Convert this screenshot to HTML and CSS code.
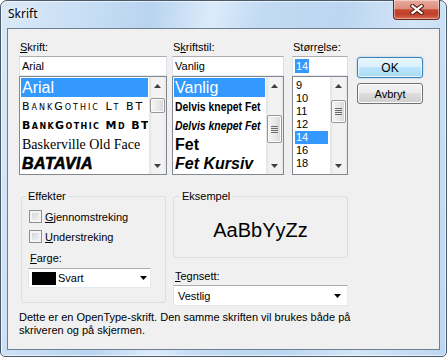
FILE: index.html
```html
<!DOCTYPE html>
<html lang="no">
<head>
    <meta charset="UTF-8">
    <meta name="viewport" content="width=device-width, initial-scale=1.0">
    <title>Skrift</title>
    <link rel="stylesheet" href="styles.css">
</head>
<body>
    <div class="window">
        <div class="titlebar">
            <span class="title">Skrift</span>
            <div class="close">
                <svg width="14" height="11" viewBox="0 0 14 11">
                    <path d="M2.5 2 L11.5 9 M11.5 2 L2.5 9" stroke="#5a2116" stroke-width="4.2" stroke-linecap="square"/>
                    <path d="M2.5 2 L11.5 9 M11.5 2 L2.5 9" stroke="#fff" stroke-width="2.2" stroke-linecap="square"/>
                </svg>
            </div>
        </div>

        <div class="client">
            <div class="top-row">
                <!-- font -->
                <div class="col-font">
                    <div class="lbl"><u>S</u>krift:</div>
                    <div class="field">Arial</div>
                    <div class="listbox">
                        <ul class="items">
                            <li class="item big sel">Arial</li>
                            <li class="item bank">BankGothic Lt BT</li>
                            <li class="item bank bank-md">BankGothic Md BT</li>
                            <li class="item bask">Baskerville Old Face</li>
                            <li class="item batavia">BATAVIA</li>
                        </ul>
                        <div class="scroll">
                            <div class="arrow"><svg width="7" height="4"><path d="M0 4 L3.5 0 L7 4Z" fill="#404040"/></svg></div>
                            <div class="track"><div class="thumb t-font"></div></div>
                            <div class="arrow"><svg width="7" height="4"><path d="M0 0 L7 0 L3.5 4Z" fill="#404040"/></svg></div>
                        </div>
                    </div>
                </div>

                <!-- style -->
                <div class="col-style">
                    <div class="lbl">S<u>k</u>riftstil:</div>
                    <div class="field">Vanlig</div>
                    <div class="listbox">
                        <ul class="items">
                            <li class="item big sel">Vanlig</li>
                            <li class="item narrow"><span>Delvis knepet Fet</span></li>
                            <li class="item narrow ital"><span>Delvis knepet Fet</span></li>
                            <li class="item big bold">Fet</li>
                            <li class="item big bold ital">Fet Kursiv</li>
                        </ul>
                        <div class="scroll">
                            <div class="arrow"><svg width="7" height="4"><path d="M0 4 L3.5 0 L7 4Z" fill="#404040"/></svg></div>
                            <div class="track">
                                <div class="thumb t-style"><i class="grip"></i><i class="grip"></i><i class="grip"></i><i class="grip"></i></div>
                            </div>
                            <div class="arrow"><svg width="7" height="4"><path d="M0 0 L7 0 L3.5 4Z" fill="#404040"/></svg></div>
                        </div>
                    </div>
                </div>

                <!-- size -->
                <div class="col-size">
                    <div class="lbl">Størr<u>e</u>lse:</div>
                    <div class="field"><span class="picked">14</span></div>
                    <div class="listbox">
                        <ul class="items sizes">
                            <li class="item">9</li>
                            <li class="item">10</li>
                            <li class="item">11</li>
                            <li class="item">12</li>
                            <li class="item sel">14</li>
                            <li class="item">16</li>
                            <li class="item">18</li>
                        </ul>
                        <div class="scroll">
                            <div class="arrow"><svg width="7" height="4"><path d="M0 4 L3.5 0 L7 4Z" fill="#404040"/></svg></div>
                            <div class="track">
                                <div class="thumb t-size"><i class="grip"></i><i class="grip"></i><i class="grip"></i><i class="grip"></i></div>
                            </div>
                            <div class="arrow"><svg width="7" height="4"><path d="M0 0 L7 0 L3.5 4Z" fill="#404040"/></svg></div>
                        </div>
                    </div>
                </div>

                <div class="btns">
                    <div class="btn btn-ok">OK</div>
                    <div class="btn">Avbryt</div>
                </div>
            </div>

            <div class="mid-row">
                <fieldset class="group effects">
                    <legend>Effekter</legend>
                    <div class="check-row"><span class="box"></span><span><u>G</u>jennomstreking</span></div>
                    <div class="check-row"><span class="box"></span><span><u>U</u>nderstreking</span></div>
                    <div class="lbl farge"><u>F</u>arge:</div>
                    <div class="combo color-combo">
                        <span class="swatch"></span>
                        <span class="combo-text">Svart</span>
                        <svg class="drop" width="7" height="4"><path d="M0 0 L7 0 L3.5 4Z" fill="#000"/></svg>
                    </div>
                </fieldset>

                <div class="right-col">
                    <fieldset class="group sample">
                        <legend>Eksempel</legend>
                        <div class="sample-area">AaBbYyZz</div>
                    </fieldset>
                    <div class="lbl charset"><u>T</u>egnsett:</div>
                    <div class="combo charset-combo">
                        <span>Vestlig</span>
                        <svg class="drop" width="7" height="4"><path d="M0 0 L7 0 L3.5 4Z" fill="#000"/></svg>
                    </div>
                </div>
            </div>

            <p class="note">Dette er en OpenType-skrift. Den samme skriften vil brukes både på<br>skriveren og på skjermen.</p>
        </div>
    </div>
</body>
</html>
```

FILE: styles.css
```css
* {
    margin: 0;
    padding: 0;
    box-sizing: border-box;
}

body {
    width: 447px;
    height: 357px;
    overflow: hidden;
    background: #fff;
    font-family: "Liberation Sans", Arial, sans-serif;
    font-size: 11px;
    color: #000;
}

ul {
    list-style: none;
}

/* window frame */
.window {
    width: 447px;
    height: 357px;
    display: flex;
    flex-direction: column;
    padding: 0 6px 6px;
    border: 1px solid #4b5a6b;
    border-radius: 7px 7px 5px 5px;
    background: linear-gradient(100deg, #dae9f8 0%, #c4dcf4 20%, #b9d4f0 30%, #dcebfa 42%, #c2daf3 52%, #bcd6f1 68%, #d3e5f7 82%, #bdd6f0 100%);
    box-shadow: inset 0 0 0 1px rgba(255, 255, 255, 0.6);
}

.titlebar {
    height: 27px;
    flex-shrink: 0;
    display: flex;
    align-items: flex-start;
}

.title {
    padding: 5px 0 0 1px;
    font: 12px/16px "Noto Sans", "Liberation Sans", sans-serif;
    text-shadow: 0 0 8px #fff, 0 0 4px rgba(255, 255, 255, 0.8);
}

.close {
    margin-left: auto;
    margin-top: -1px;
    width: 47px;
    height: 20px;
    display: flex;
    align-items: center;
    justify-content: center;
    border: 1px solid #6c2619;
    border-top: none;
    border-radius: 0 0 4px 4px;
    background: linear-gradient(#e9aa9d 0%, #dd8f7f 45%, #c64730 52%, #c1402b 75%, #d56c50 100%);
    box-shadow: inset 0 0 0 1px rgba(255, 255, 255, 0.4);
}

.client {
    flex: 1;
    background: #f0f0f0;
    border: 1px solid #6e7f92;
    padding: 12px 0 0 11px;
}

/* top row: lists and buttons */
.top-row {
    display: flex;
}

.col-font {
    width: 148px;
    margin-right: 5px;
}

.col-style {
    width: 112px;
    margin-right: 8px;
}

.col-size {
    width: 56px;
    margin-right: 9px;
}

.lbl {
    height: 15px;
    line-height: 13px;
    padding-left: 1px;
}

.field {
    height: 20px;
    background: #fff;
    border: 1px solid;
    border-color: #abadb3 #dbdfe6 #e3e9ef #e2e3ea;
    padding: 0 2px;
    line-height: 18px;
    white-space: nowrap;
    overflow: hidden;
}

.picked {
    background: #3399ff;
    color: #fff;
    padding: 1px 1px;
}

.listbox {
    height: 99px;
    display: flex;
    background: #fff;
    border: 1px solid #828790;
}

.items {
    flex: 1;
    min-width: 0;
    padding: 1px;
    overflow: hidden;
}

.item {
    height: 19px;
    line-height: 19px;
    padding-left: 1px;
    white-space: nowrap;
    overflow: hidden;
}

.sel {
    background: #3399ff;
    color: #fff;
}

.big {
    font-size: 16px;
}

.bold {
    font-weight: bold;
}

.ital {
    font-style: italic;
}

.bank {
    font-family: "DejaVu Sans", sans-serif;
    font-size: 11px;
    font-variant: small-caps;
    letter-spacing: 2px;
}

.bank-md {
    font-weight: bold;
    letter-spacing: 1.4px;
}

.bask {
    font-family: "Liberation Serif", serif;
    font-size: 14px;
}

.batavia {
    font-size: 16px;
    font-weight: bold;
    font-style: italic;
    letter-spacing: 0.5px;
    -webkit-text-stroke: 0.6px #000;
}

.narrow span {
    display: inline-block;
    font-size: 13px;
    font-weight: bold;
    transform: scaleX(0.8);
    transform-origin: left center;
}

.sizes {
    padding: 2px 2px 0;
}

.sizes .item {
    height: 13px;
    line-height: 13px;
    padding-left: 1px;
}

/* scrollbar */
.scroll {
    width: 17px;
    flex-shrink: 0;
    display: flex;
    flex-direction: column;
    background: linear-gradient(to right, #e4e4e4, #f2f2f2 20%, #f3f3f3 80%, #eaeaea);
}

.arrow {
    height: 17px;
    display: flex;
    align-items: center;
    justify-content: center;
}

.track {
    flex: 1;
    padding: 0 1px;
}

.thumb {
    border: 1px solid #979797;
    border-radius: 2px;
    background: linear-gradient(to right, #f4f4f4, #e9e9e9 50%, #d8d8d8);
    box-shadow: inset 0 0 0 1px #fbfbfb;
    display: flex;
    flex-direction: column;
    align-items: center;
    justify-content: center;
    gap: 1px;
}

.grip {
    width: 7px;
    height: 1px;
    background: #6a6a6a;
}

.t-font {
    margin-top: 4px;
    height: 15px;
}

.t-style {
    margin-top: 21px;
    height: 28px;
}

.t-size {
    margin-top: 6px;
    height: 23px;
}

/* buttons */
.btns {
    width: 66px;
    padding-top: 16px;
    display: flex;
    flex-direction: column;
    gap: 5px;
}

.btn {
    height: 21px;
    display: flex;
    align-items: center;
    justify-content: center;
    border: 1px solid #707070;
    border-radius: 3px;
    background: linear-gradient(#f2f2f2 0%, #ebebeb 49%, #dddddd 50%, #cfcfcf 100%);
    box-shadow: inset 0 0 0 1px #fcfcfc;
}

.btn-ok {
    font-size: 12px;
    border-color: #3c7fb1;
    background: linear-gradient(#eaf6fd 0%, #d9f0fc 49%, #bee6fd 50%, #a7d9f5 100%);
    box-shadow: inset 0 0 0 1px #e9f6fc, 0 0 2px #7ec4ef;
}

/* middle row */
.mid-row {
    display: flex;
    align-items: flex-start;
    margin-top: 15px;
    padding-left: 2px;
}

.group {
    border: 1px solid #d5dfe5;
    border-radius: 3px;
}

.group legend {
    padding: 0 2px;
    margin-left: -3px;
    line-height: 13px;
}

.effects {
    width: 145px;
    height: 113px;
    margin-right: 7px;
    padding: 6px 7px 0;
}

.check-row {
    height: 15px;
    display: flex;
    align-items: center;
}

.check-row + .check-row {
    margin-top: 5px;
}

.box {
    width: 13px;
    height: 13px;
    margin-right: 3px;
    border: 1px solid #8e8f8f;
    background: linear-gradient(135deg, #cfd2d6, #f7f7f7);
    box-shadow: inset 0 0 0 2px #f4f4f4;
}

.farge {
    margin-top: 8px;
    height: 13px;
}

.combo {
    height: 20px;
    display: flex;
    align-items: center;
    background: #fff;
    border: 1px solid;
    border-color: #abadb3 #e3e9ef #e3e9ef #e2e3ea;
}

.color-combo {
    width: 123px;
    margin: 3px 0 0 -1px;
    padding: 0 3px;
}

.swatch {
    width: 24px;
    height: 13px;
    background: #000;
    margin-right: 2px;
}

.drop {
    margin-left: auto;
}

.right-col {
    width: 175px;
    display: flex;
    flex-direction: column;
}

.sample {
    height: 68px;
    padding: 0 9px;
}

.sample-area {
    height: 54px;
    display: flex;
    align-items: center;
    justify-content: center;
    font-size: 20px;
}

.charset {
    margin-top: 12px;
    height: 13px;
    padding-left: 2px;
}

.charset-combo {
    margin-top: 2px;
    height: 21px;
    padding: 0 6px 0 4px;
}

.note {
    margin-top: 5px;
    line-height: 13px;
}
```
